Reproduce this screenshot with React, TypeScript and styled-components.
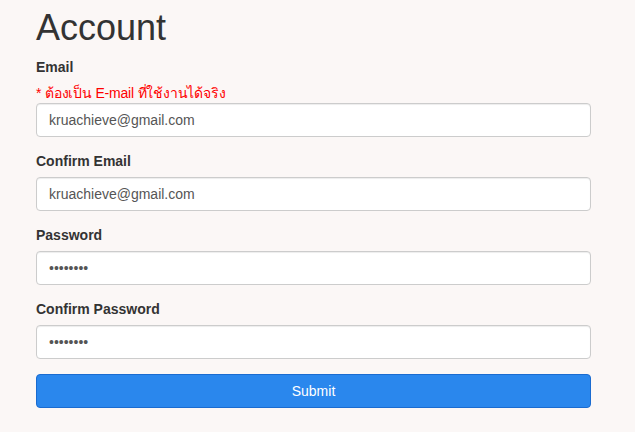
import React from 'react'
import styled, { createGlobalStyle } from 'styled-components'

const GlobalStyle = createGlobalStyle`
  html, body {
    margin: 0;
    padding: 0;
    background: #fbf7f6;
    font-family: "Liberation Sans", Arial, sans-serif;
    font-size: 14px;
    line-height: 1.42857;
    color: #333;
  }
  * { box-sizing: border-box; }
`

const Page = styled.div`
  padding: 8px 0 0 36px;
`

const Form = styled.form`
  width: 555px;
`

const Title = styled.h1`
  margin: 0 0 10px;
  height: 40px;
  font-size: 36px;
  font-weight: 400;
  line-height: 40px;
  color: #333;
`

const Group = styled.div`
  margin-bottom: 15px;
`

const Label = styled.label`
  display: block;
  height: 20px;
  margin-bottom: 5px;
  font-weight: 700;
  color: #333;
`

const Hint = styled.div`
  height: 20px;
  line-height: 20px;
  color: #ff0000;
  letter-spacing: -0.2px;
`

const Input = styled.input`
  display: block;
  width: 100%;
  height: 34px;
  padding: 6px 12px;
  font-family: inherit;
  font-size: 14px;
  color: #555;
  background: #fff;
  border: 1px solid #ccc;
  border-radius: 4px;
  box-shadow: inset 0 1px 1px rgba(0, 0, 0, 0.075);
  outline: none;
`

const Button = styled.button`
  display: block;
  width: 100%;
  height: 34px;
  padding: 6px 12px;
  font-family: inherit;
  font-size: 14px;
  color: #fff;
  background: #2a87ed;
  border: 1px solid #1a6bd0;
  border-radius: 4px;
  cursor: pointer;
`

const fields = [
  { label: 'Email', type: 'email', value: 'kruachieve@gmail.com', hint: '* ต้องเป็น E-mail ที่ใช้งานได้จริง' },
  { label: 'Confirm Email', type: 'email', value: 'kruachieve@gmail.com' },
  { label: 'Password', type: 'password', value: '12345678' },
  { label: 'Confirm Password', type: 'password', value: '12345678' },
]

export default function App() {
  return (
    <>
      <GlobalStyle />
      <Page>
        <Form onSubmit={(e) => e.preventDefault()}>
          <Title>Account</Title>
          {fields.map((f) => (
            <Group key={f.label}>
              <Label>{f.label}</Label>
              {f.hint && <Hint>{f.hint}</Hint>}
              <Input type={f.type} defaultValue={f.value} readOnly />
            </Group>
          ))}
          <Button type="submit">Submit</Button>
        </Form>
      </Page>
    </>
  )
}
